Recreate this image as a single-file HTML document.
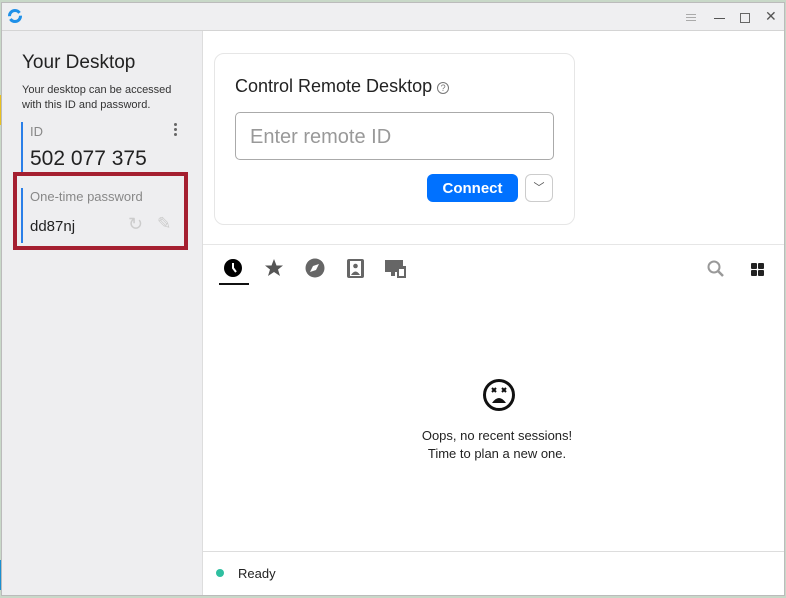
<!DOCTYPE html>
<html><head><style>
*{margin:0;padding:0;box-sizing:border-box}
body{width:786px;height:598px;overflow:hidden;background:#c8d8c8;font-family:"Liberation Sans",sans-serif;position:relative}
.win{position:absolute;left:2px;top:3px;width:782px;height:592px;background:#fff;box-shadow:0 0 0 1px #bbb}
.title{position:absolute;left:0;top:0;width:782px;height:28px;background:#efeff1;border-bottom:1px solid #d4d4d4}
.left{position:absolute;left:0;top:28px;width:201px;height:564px;background:#eeeef0;border-right:1px solid #ddd}
.abs{position:absolute}
</style></head><body>
<div class="abs" style="left:0;top:95px;width:3px;height:30px;background:#e8c020"></div>
<div class="abs" style="left:0;top:560px;width:3px;height:30px;background:#1a8fd0"></div>
<div class="win">
<div class="title">
<svg class="abs" style="left:5px;top:5px" width="16" height="16" viewBox="0 0 16 16"><circle cx="8" cy="8" r="5.5" fill="none" stroke="#1e90e8" stroke-width="3" stroke-dasharray="14 3"/></svg>
<div class="abs" style="left:684px;top:11px;width:10px;height:1px;background:#aaa;box-shadow:0 3px #aaa,0 6px #aaa"></div>
<div class="abs" style="left:712px;top:15px;width:11px;height:1px;background:#555"></div>
<div class="abs" style="left:738px;top:10px;width:10px;height:10px;border:1px solid #666"></div>
<div class="abs" style="left:763px;top:5px;font-size:14px;color:#555">✕</div>
</div>
<div class="left">
<div class="abs" style="left:20px;top:21px;font-size:19px;color:#222">Your Desktop</div>
<div class="abs" style="left:20px;top:52px;font-size:11px;line-height:15px;color:#333">Your desktop can be accessed<br>with this ID and password.</div>
<div class="abs" style="left:19px;top:91px;width:2px;height:50px;background:#2a7fe8"></div>
<div class="abs" style="left:28px;top:93px;font-size:13px;color:#888">ID</div>
<div class="abs" style="left:172px;top:92px;width:3px;height:3px;background:#666;border-radius:50%;box-shadow:0 5px #666,0 10px #666"></div>
<div class="abs" style="left:28px;top:116px;font-size:21px;color:#222">502 077 375</div>
<div class="abs" style="left:11px;top:141px;width:175px;height:78px;border:4px solid #a51f30"></div>
<div class="abs" style="left:19px;top:157px;width:2px;height:55px;background:#2a7fe8"></div>
<div class="abs" style="left:28px;top:158px;font-size:13px;color:#888">One-time password</div>
<div class="abs" style="left:28px;top:187px;font-size:15px;color:#222">dd87nj</div>
<div class="abs" style="left:126px;top:183px;font-size:18px;color:#ccc">↻</div>
<div class="abs" style="left:155px;top:183px;font-size:17px;color:#ccc">✎</div>
</div>
<div class="abs" style="left:212px;top:50px;width:361px;height:172px;border:1px solid #e6e6e6;border-radius:10px"></div>
<div class="abs" style="left:233px;top:73px;font-size:18px;color:#222">Control Remote Desktop <span style="display:inline-block;width:12px;height:12px;border:1.3px solid #777;border-radius:50%;font-size:9px;text-align:center;line-height:10px;color:#777;vertical-align:1px">?</span></div>
<div class="abs" style="left:233px;top:109px;width:319px;height:48px;border:1px solid #aaa;border-radius:5px;font-size:20px;color:#999;padding:13px 14px">Enter remote ID</div>
<div class="abs" style="left:425px;top:171px;width:91px;height:28px;background:#0071ff;border-radius:6px;color:#fff;font-size:15px;font-weight:bold;text-align:center;line-height:30px">Connect</div>
<div class="abs" style="left:523px;top:171px;width:28px;height:28px;border:1px solid #ccc;border-radius:6px;font-size:11px;text-align:center;line-height:26px;color:#555">﹀</div>
<div class="abs" style="left:201px;top:241px;width:581px;height:1px;background:#e6e6e6"></div>
<svg class="abs" style="left:219px;top:255px" width="200" height="24">
<circle cx="12" cy="10" r="9" fill="#000"/><path d="M12 5v5l3 4" stroke="#fff" stroke-width="2" fill="none"/>
<polygon points="53,1 55.5,7.5 62,7.5 57,11.5 59,18 53,14 47,18 49,11.5 44,7.5 50.5,7.5" fill="#555"/>
<circle cx="94" cy="10" r="9.5" fill="#666"/><path d="M98 6l-3 6-6 2 3-6z" fill="#fff"/>
<rect x="126" y="1" width="17" height="19" rx="2" fill="#666"/><rect x="129" y="3" width="11" height="15" fill="#fff"/><circle cx="134.5" cy="8" r="2.3" fill="#666"/><path d="M130 17q4.5-7 9 0z" fill="#666"/>
<rect x="164" y="2" width="18" height="12" fill="#666"/><rect x="170" y="14" width="4" height="4" fill="#666"/><rect x="176" y="8" width="9" height="12" fill="#666"/><rect x="178" y="11" width="5" height="7" fill="#fff"/>
</svg>
<div class="abs" style="left:217px;top:280px;width:30px;height:2px;background:#111"></div>
<svg class="abs" style="left:704px;top:256px" width="64" height="20"><circle cx="8" cy="8" r="5.5" stroke="#999" stroke-width="2" fill="none"/><path d="M12 12l5 5" stroke="#999" stroke-width="2.5"/>
<rect x="45" y="4" width="6" height="6" rx="1" fill="#222"/><rect x="52" y="4" width="6" height="6" rx="1" fill="#222"/><rect x="45" y="11" width="6" height="6" rx="1" fill="#222"/><rect x="52" y="11" width="6" height="6" rx="1" fill="#222"/></svg>
<svg class="abs" style="left:480px;top:375px" width="34" height="34"><circle cx="17" cy="17" r="14.5" stroke="#111" stroke-width="3" fill="none"/><path d="M10 10l4 4M14 10l-4 4M20 10l4 4M24 10l-4 4" stroke="#111" stroke-width="2"/><path d="M10 25q7-10 14 0z" fill="#111"/></svg>
<div class="abs" style="left:379px;top:424px;width:232px;text-align:center;font-size:13px;line-height:18px;color:#222">Oops, no recent sessions!<br>Time to plan a new one.</div>
<div class="abs" style="left:201px;top:548px;width:581px;height:1px;background:#ddd"></div>
<div class="abs" style="left:214px;top:566px;width:8px;height:8px;border-radius:50%;background:#2fbfa0"></div>
<div class="abs" style="left:236px;top:563px;font-size:13px;color:#222">Ready</div>
</div>
</body></html>
